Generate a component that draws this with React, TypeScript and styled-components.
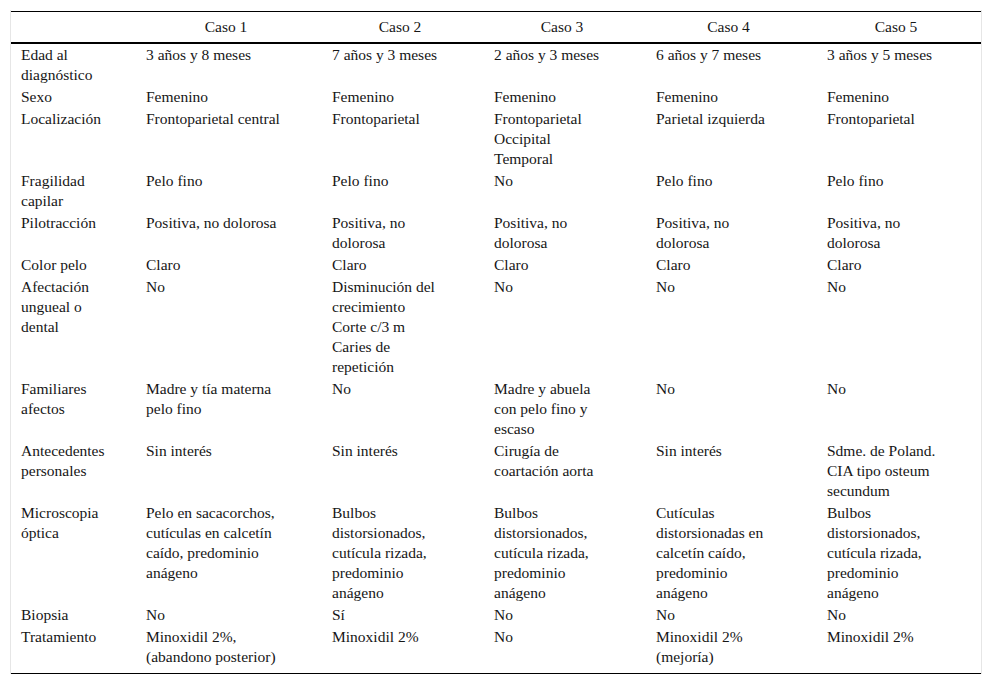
import React from "react";
import styled, { createGlobalStyle } from "styled-components";

/**
 * Styles
 */
const GlobalStyle = createGlobalStyle`
  body {
    margin: 0;
    background: #ffffff;
    font-family: "Liberation Serif", "Times New Roman", serif;
    color: #161616;
  }
`;

const Frame = styled.div`
  margin: 10px 10px 0 10px;
  width: 970px;
  border-left: 1px solid #e6e6e6;
  border-right: 1px solid #e6e6e6;
  padding-top: 1px;
`;

const Table = styled.table`
  width: 970px;
  table-layout: fixed;
  border-collapse: collapse;
  font-size: 15.5px;
  line-height: 20px;
  border-top: 1px solid #000;
  border-bottom: 1px solid #000;
`;

const HeadRow = styled.tr`
  height: 31px;
  border-bottom: 2px solid #000;
`;

const HeadCell = styled.th`
  font-weight: normal;
  text-align: center;
  vertical-align: middle;
  padding: 1px 16px 0 10px;
`;

const BodyRow = styled.tr`
  &:last-child td {
    padding-bottom: 6px;
  }
`;

const Cell = styled.td`
  vertical-align: top;
  text-align: left;
  padding: 1px 4px 1px 10px;
  white-space: nowrap;
`;

const Line = styled.div``;

/**
 * Data
 */
const widths = [125, 186, 162, 162, 171, 164];

const cases = ["Caso 1", "Caso 2", "Caso 3", "Caso 4", "Caso 5"];

const bulbos = "Bulbos|distorsionados,|cutícula rizada,|predominio|anágeno";

const rows: string[][] = [
  ["Edad al|diagnóstico", "3 años y 8 meses", "7 años y 3 meses", "2 años y 3 meses", "6 años y 7 meses", "3 años y 5 meses"],
  ["Sexo", "Femenino", "Femenino", "Femenino", "Femenino", "Femenino"],
  ["Localización", "Frontoparietal central", "Frontoparietal", "Frontoparietal|Occipital|Temporal", "Parietal izquierda", "Frontoparietal"],
  ["Fragilidad|capilar", "Pelo fino", "Pelo fino", "No", "Pelo fino", "Pelo fino"],
  ["Pilotracción", "Positiva, no dolorosa", "Positiva, no|dolorosa", "Positiva, no|dolorosa", "Positiva, no|dolorosa", "Positiva, no|dolorosa"],
  ["Color pelo", "Claro", "Claro", "Claro", "Claro", "Claro"],
  ["Afectación|ungueal o|dental", "No", "Disminución del|crecimiento|Corte c/3 m|Caries de|repetición", "No", "No", "No"],
  ["Familiares|afectos", "Madre y tía materna|pelo fino", "No", "Madre y abuela|con pelo fino y|escaso", "No", "No"],
  ["Antecedentes|personales", "Sin interés", "Sin interés", "Cirugía de|coartación aorta", "Sin interés", "Sdme. de Poland.|CIA tipo osteum|secundum"],
  ["Microscopia|óptica", "Pelo en sacacorchos,|cutículas en calcetín|caído, predominio|anágeno", bulbos, bulbos, "Cutículas|distorsionadas en|calcetín caído,|predominio|anágeno", bulbos],
  ["Biopsia", "No", "Sí", "No", "No", "No"],
  ["Tratamiento", "Minoxidil 2%,|(abandono posterior)", "Minoxidil 2%", "No", "Minoxidil 2%|(mejoría)", "Minoxidil 2%"],
];

const App = () => {
  return (
    <>
      <GlobalStyle />
      <Frame>
        <Table>
          <colgroup>
            {widths.map((w, i) => (
              <col key={i} style={{ width: w }} />
            ))}
          </colgroup>
          <thead>
            <HeadRow>
              <HeadCell />
              {cases.map((c) => (
                <HeadCell key={c}>{c}</HeadCell>
              ))}
            </HeadRow>
          </thead>
          <tbody>
            {rows.map((row, r) => (
              <BodyRow key={r}>
                {row.map((cell, c) => (
                  <Cell key={c}>
                    {cell.split("|").map((line, l) => (
                      <Line key={l}>{line}</Line>
                    ))}
                  </Cell>
                ))}
              </BodyRow>
            ))}
          </tbody>
        </Table>
      </Frame>
    </>
  );
};

export default App;
